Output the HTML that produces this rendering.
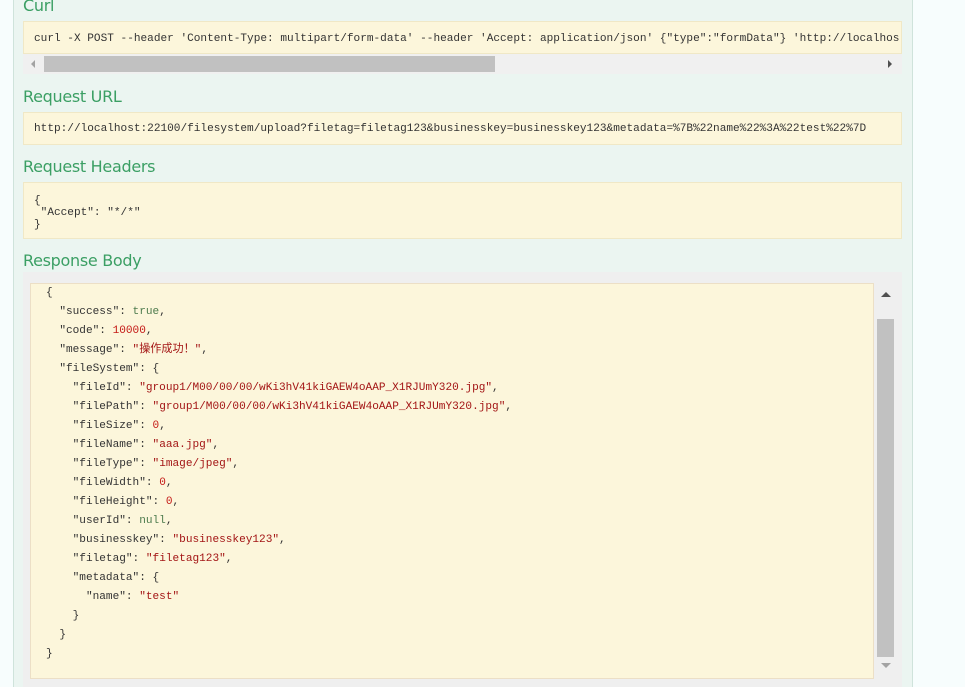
<!DOCTYPE html>
<html><head><meta charset="utf-8"><style>
*{margin:0;padding:0;box-sizing:border-box}
body{width:965px;height:687px;overflow:hidden;background:#f7fdfd;position:relative;font-family:"Liberation Sans",sans-serif}
.panel{position:absolute;left:13px;top:0;width:900px;height:687px;background:#ebf5f1;border-left:1px solid #cfe3db;border-right:1px solid #cfe3db}
h4{position:absolute;left:23px;font-weight:normal;font-size:16px;color:#3b9f64;font-family:"DejaVu Sans","Liberation Sans",sans-serif;letter-spacing:-0.3px}
.box{position:absolute;left:23px;width:879px;background:#fcf6db;border:1px solid #f0e8c6;font-family:"Liberation Mono",monospace;font-size:11.1px;color:#333;white-space:pre;overflow:hidden;padding-left:10px}
.mono{font-family:"Liberation Mono","Noto Sans CJK SC",monospace;font-size:11.1px;white-space:pre}
.s{color:#a31515}.n{color:#c41a16}.b{color:#4d7b4d}.k{color:#333}
</style></head><body>
<div class="panel"></div>
<h4 style="top:-4px">Curl</h4>
<div class="box" style="top:21px;height:33px;line-height:34px">curl -X POST --header 'Content-Type: multipart/form-data' --header 'Accept: application/json' {"type":"formData"} 'http://localhos</div>
<div style="position:absolute;left:23px;top:54px;width:879px;height:20px;background:#f0f0f0"></div>
<div style="position:absolute;left:44px;top:56px;width:451px;height:16px;background:#c1c1c1"></div>
<div style="position:absolute;left:31px;top:60px;width:0;height:0;border-top:4px solid transparent;border-bottom:4px solid transparent;border-right:4px solid #a3a3a3"></div>
<div style="position:absolute;left:888px;top:60px;width:0;height:0;border-top:4px solid transparent;border-bottom:4px solid transparent;border-left:4px solid #505050"></div>
<h4 style="top:87px">Request URL</h4>
<div class="box" style="top:112px;height:33px;line-height:33px">http://localhost:22100/filesystem/upload?filetag=filetag123&amp;businesskey=businesskey123&amp;metadata=%7B%22name%22%3A%22test%22%7D</div>
<h4 style="top:157px">Request Headers</h4>
<div class="box" style="top:182px;height:57px;line-height:12px;padding-top:12px">{
 "Accept": "*/*"
}</div>
<h4 style="top:251px">Response Body</h4>
<div style="position:absolute;left:23px;top:272px;width:879px;height:415px;background:#efefef"></div>
<div style="position:absolute;left:30px;top:283px;width:844px;height:396px;background:#fcf6db;border:1px solid #ecdfc6"></div>
<div style="position:absolute;left:877px;top:319px;width:17px;height:338px;background:#c1c1c1"></div>
<div style="position:absolute;left:881px;top:292px;border-left:5px solid transparent;border-right:5px solid transparent;border-bottom:5px solid #505050"></div>
<div style="position:absolute;left:881px;top:663px;border-left:5px solid transparent;border-right:5px solid transparent;border-top:5px solid #a3a3a3"></div>
<div class="mono" style="position:absolute;left:46px;top:284px;line-height:19px;color:#333">{
  "success": <span class="b">true</span>,
  "code": <span class="n">10000</span>,
  "message": <span class="s">"操作成功！"</span>,
  "fileSystem": {
    "fileId": <span class="s">"group1/M00/00/00/wKi3hV41kiGAEW4oAAP_X1RJUmY320.jpg"</span>,
    "filePath": <span class="s">"group1/M00/00/00/wKi3hV41kiGAEW4oAAP_X1RJUmY320.jpg"</span>,
    "fileSize": <span class="n">0</span>,
    "fileName": <span class="s">"aaa.jpg"</span>,
    "fileType": <span class="s">"image/jpeg"</span>,
    "fileWidth": <span class="n">0</span>,
    "fileHeight": <span class="n">0</span>,
    "userId": <span class="b">null</span>,
    "businesskey": <span class="s">"businesskey123"</span>,
    "filetag": <span class="s">"filetag123"</span>,
    "metadata": {
      "name": <span class="s">"test"</span>
    }
  }
}</div>
</body></html>
